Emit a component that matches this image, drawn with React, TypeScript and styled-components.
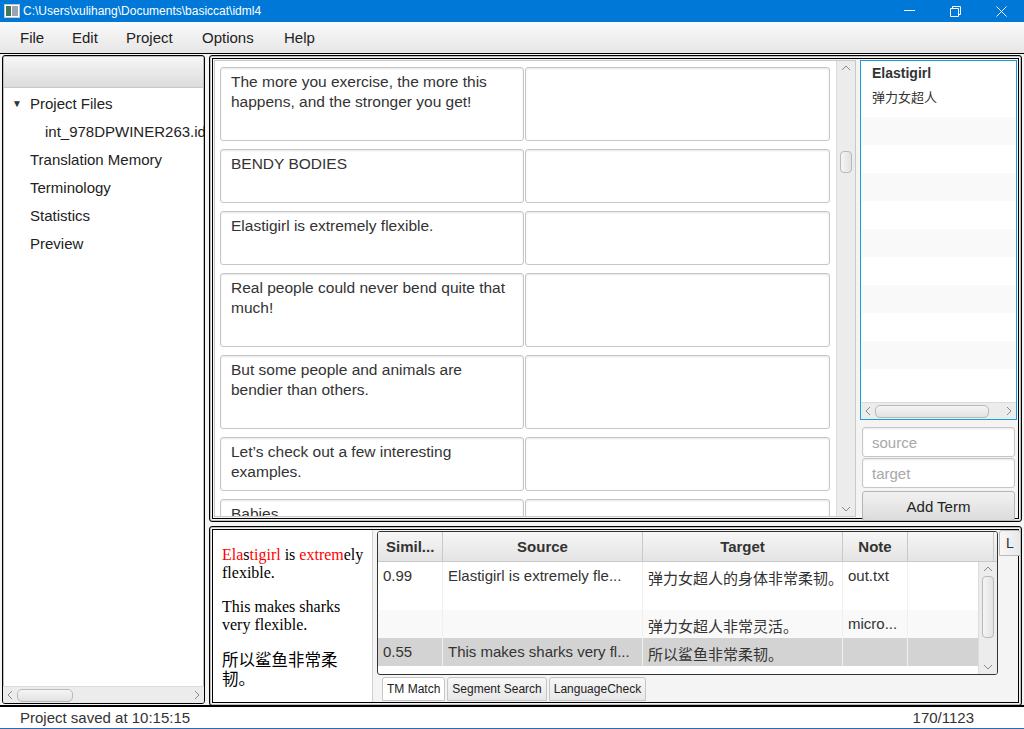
import React from 'react';
import styled, { createGlobalStyle } from 'styled-components';

const GlobalStyle = createGlobalStyle`
  html, body {
    margin: 0;
    padding: 0;
    background: #f4f4f4;
  }
  body {
    font-family: "Liberation Sans", "Noto Sans CJK SC", sans-serif;
    color: #333;
  }
`;

const CJK = `"Liberation Sans", "Noto Sans CJK SC", sans-serif`;

// Window frame
//
const Window = styled.div`
  width: 1024px;
  height: 729px;
  display: flex;
  flex-direction: column;
  background: #f4f4f4;
  overflow: hidden;
  border-bottom: 1px solid #2b6cb0;
  box-sizing: border-box;
`;

const TitleBar = styled.div`
  height: 22px;
  background: #0078d7;
  color: #fff;
  display: flex;
  align-items: center;
  font-size: 12px;
  flex-shrink: 0;
`;

const TitleIcon = styled.div`
  width: 23px;
  display: flex;
  justify-content: center;
`;

const TitleText = styled.span`
  flex: 1;
`;

const WinButton = styled.div`
  width: 46px;
  height: 22px;
  display: flex;
  align-items: center;
  justify-content: center;
`;

const MenuBar = styled.div`
  height: 31px;
  background: linear-gradient(#fafafa, #e6e6e6);
  display: flex;
  align-items: center;
  padding-left: 20px;
  font-size: 15px;
  color: #222;
  flex-shrink: 0;
`;

const MenuItem = styled.span<{ w: number }>`
  width: ${({ w }) => w}px;
`;

const Main = styled.div`
  flex: 1;
  display: flex;
  padding: 1px 2px 1px 2px;
  gap: 4px;
  min-height: 0;
  border-top: 1px solid #000;
`;

// Left: project tree
//
const SidePanel = styled.div`
  width: 201px;
  display: flex;
  flex-direction: column;
  border: 1px solid #000;
  box-shadow: inset 0 0 0 1px #bdbdbd;
  border-radius: 3px;
  background: #fff;
  overflow: hidden;
`;

const SideHeader = styled.div`
  height: 30px;
  background: linear-gradient(#f6f6f6, #dcdcdc);
  border-bottom: 1px solid #c8c8c8;
  margin: 1px;
`;

const Tree = styled.div`
  flex: 1;
  font-size: 15px;
  color: #222;
`;

const TreeRow = styled.div<{ indent: number }>`
  height: 28px;
  display: flex;
  align-items: center;
  padding-left: ${({ indent }) => indent}px;
  white-space: nowrap;
  overflow: hidden;
`;

const Arrow = styled.span`
  width: 18px;
  font-size: 10px;
  color: #333;
  margin-left: -18px;
`;

const HScroll = styled.div`
  height: 16px;
  background: #ececec;
  border-top: 1px solid #dcdcdc;
  display: flex;
  align-items: center;
  padding: 0 4px;
  gap: 4px;
  font-size: 11px;
  color: #999;
  flex-shrink: 0;
`;

const HThumb = styled.div<{ w: number }>`
  width: ${({ w }) => w}px;
  height: 11px;
  border: 1px solid #b9b9b9;
  border-radius: 5px;
  background: linear-gradient(#f5f5f5, #e2e2e2);
`;

const Spacer = styled.div`
  flex: 1;
`;

// Right column
//
const Column = styled.div`
  flex: 1;
  display: flex;
  flex-direction: column;
  gap: 4px;
  min-width: 0;
`;

const Pane = styled.div<{ h: number }>`
  height: ${({ h }) => h}px;
  border: 1px solid #000;
  box-shadow: inset 0 0 0 1px #bdbdbd, inset 0 0 0 2px #f4f4f4, inset 0 0 0 3px #000;
  border-radius: 3px;
  display: flex;
  padding: 4px;
  gap: 4px;
  box-sizing: border-box;
  flex-shrink: 0;
`;

const SegmentArea = styled.div`
  width: 640px;
  display: flex;
  background: #fff;
  border: 1px solid #c8c8c8;
`;

const SegmentList = styled.div`
  flex: 1;
  padding: 6px 4px 0 5px;
  display: flex;
  flex-direction: column;
  gap: 8px;
  overflow: hidden;
`;

const SegmentRow = styled.div<{ h: number }>`
  height: ${({ h }) => h}px;
  display: flex;
  gap: 1px;
  flex-shrink: 0;
`;

const Cell = styled.div<{ wide?: boolean }>`
  width: ${({ wide }) => (wide ? 305 : 304)}px;
  border: 1px solid #c6c6c6;
  border-radius: 3px;
  box-shadow: inset 0 1px 2px #e6e6e6;
  padding: 4px 6px 4px 10px;
  font-size: 15.5px;
  line-height: 20px;
  color: #333;
  box-sizing: border-box;
  background: #fff;
`;

const VScroll = styled.div`
  width: 18px;
  background: #ececec;
  border-left: 1px solid #dcdcdc;
  display: flex;
  flex-direction: column;
  align-items: center;
  font-size: 11px;
  color: #888;
`;

const VThumb = styled.div<{ h: number; top: number }>`
  width: 12px;
  height: ${({ h }) => h}px;
  margin-top: ${({ top }) => top}px;
  border: 1px solid #b9b9b9;
  border-radius: 4px;
  background: linear-gradient(90deg, #f5f5f5, #e2e2e2);
  box-sizing: border-box;
`;

const ScrollArrow = styled.div`
  height: 14px;
  display: flex;
  align-items: center;
  justify-content: center;
`;

// Terminology panel
//
const TermPanel = styled.div`
  flex: 1;
  display: flex;
  flex-direction: column;
  gap: 1px;
`;

const TermList = styled.div`
  height: 358px;
  border: 1px solid #1a9ed7;
  background: #fff;
  display: flex;
  flex-direction: column;
  overflow: hidden;
  flex-shrink: 0;
`;

const TermEntry = styled.div`
  height: 56px;
  padding: 2px 11px 0;
  box-sizing: border-box;
  flex-shrink: 0;
`;

const TermSource = styled.div`
  font-weight: bold;
  font-size: 14px;
  color: #333;
  line-height: 18px;
  margin-top: 1px;
`;

const TermTarget = styled.div`
  font-family: ${CJK};
  font-size: 13px;
  color: #333;
  margin-top: 5px;
`;

const Stripe = styled.div<{ odd: boolean }>`
  height: 28px;
  flex-shrink: 0;
  background: ${({ odd }) => (odd ? '#f9f9f9' : '#fff')};
`;

const TermInput = styled.div`
  height: 30px;
  border: 1px solid #c6c6c6;
  border-radius: 3px;
  background: #fff;
  box-shadow: inset 0 1px 2px #e8e8e8;
  display: flex;
  align-items: center;
  padding-left: 9px;
  font-size: 15px;
  color: #a8a8a8;
  box-sizing: border-box;
  margin: 0 2px;
  flex-shrink: 0;
`;

const Button = styled.div`
  height: 30px;
  border: 1px solid #b5b5b5;
  border-radius: 3px;
  background: linear-gradient(#f2f2f2, #dcdcdc);
  display: flex;
  align-items: center;
  justify-content: center;
  font-size: 15px;
  color: #222;
  margin: 2px 2px 0;
  box-sizing: border-box;
  flex-shrink: 0;
`;

// Bottom: preview and TM
//
const Preview = styled.div`
  width: 160px;
  flex-shrink: 0;
  background: #fff;
  border-right: 1px solid #d0d0d0;
  padding: 16px 4px 0 9px;
  color: #000;
  box-sizing: border-box;
  margin: -1px 0 -1px -1px;
`;

const Para = styled.p<{ cjk?: boolean }>`
  margin: 0 0 16px;
  font-family: ${({ cjk }) =>
    cjk ? `"Noto Sans CJK SC", serif` : `"Liberation Serif", serif`};
  font-size: ${({ cjk }) => (cjk ? 16.5 : 16)}px;
  line-height: ${({ cjk }) => (cjk ? 19 : 18)}px;
`;

const Hit = styled.span`
  color: #f00;
`;

const MatchArea = styled.div`
  flex: 1;
  display: flex;
  flex-direction: column;
  gap: 1px;
  min-width: 0;
`;

const Table = styled.div`
  height: 142px;
  border: 1px solid #333;
  border-radius: 3px;
  background: #fff;
  display: flex;
  flex-direction: column;
  overflow: hidden;
  flex-shrink: 0;
`;

const HeadRow = styled.div`
  height: 29px;
  display: flex;
  background: linear-gradient(#f6f6f6, #e4e4e4);
  border-bottom: 1px solid #c8c8c8;
  flex-shrink: 0;
`;

const HeadCell = styled.div<{ w: number; left?: boolean }>`
  width: ${({ w }) => w}px;
  flex-shrink: 0;
  border-right: 1px solid #c8c8c8;
  display: flex;
  align-items: center;
  justify-content: ${({ left }) => (left ? 'flex-start' : 'center')};
  padding-left: ${({ left }) => (left ? 8 : 0)}px;
  font-weight: bold;
  font-size: 15px;
  color: #333;
  box-sizing: border-box;
`;

const TableBody = styled.div`
  flex: 1;
  display: flex;
  min-height: 0;
`;

const Rows = styled.div`
  flex: 1;
  display: flex;
  flex-direction: column;
`;

const Row = styled.div<{ h: number; bg: string }>`
  height: ${({ h }) => h}px;
  display: flex;
  background: ${({ bg }) => bg};
  flex-shrink: 0;
`;

const DataCell = styled.div<{ w: number }>`
  width: ${({ w }) => w}px;
  flex-shrink: 0;
  padding: 5px 5px 0 5px;
  font-family: ${CJK};
  font-size: 15px;
  color: #333;
  white-space: nowrap;
  overflow: hidden;
  box-sizing: border-box;
  border-right: 1px solid #f0f0f0;
`;

const TabStrip = styled.div`
  display: flex;
  gap: 2px;
  padding: 1px 0 0 5px;
`;

const Tab = styled.div<{ active?: boolean }>`
  height: 24px;
  padding: 0 4px;
  border: 1px solid #c6c6c6;
  border-radius: 3px 3px 0 0;
  background: ${({ active }) =>
    active ? '#fff' : 'linear-gradient(#f7f7f7, #e8e8e8)'};
  font-size: 12px;
  color: #222;
  display: flex;
  align-items: center;
  box-sizing: border-box;
`;

const SideTab = styled.div`
  width: 22px;
  height: 26px;
  border: 1px solid #bbb;
  border-radius: 3px 3px 0 0;
  background: linear-gradient(90deg, #f7f7f7, #e8e8e8);
  font-size: 14px;
  color: #333;
  display: flex;
  justify-content: center;
  padding-top: 4px;
  box-sizing: border-box;
  margin: -1px -4px 0 -3px;
`;

const StatusBar = styled.div`
  height: 21px;
  background: #fff;
  border-top: 2px solid #000;
  display: flex;
  align-items: center;
  justify-content: space-between;
  padding: 0 50px 0 20px;
  font-size: 15px;
  color: #333;
  flex-shrink: 0;
`;

const segments: { src: string; h: number }[] = [
  { src: 'The more you exercise, the more this happens, and the stronger you get!', h: 74 },
  { src: 'BENDY BODIES', h: 54 },
  { src: 'Elastigirl is extremely flexible.', h: 54 },
  { src: 'Real people could never bend quite that much!', h: 74 },
  { src: 'But some people and animals are bendier than others.', h: 74 },
  { src: 'Let\u2019s check out a few interesting examples.', h: 54 },
  { src: 'Babies', h: 54 },
];

const cols = [65, 200, 200, 65, 86];

const matches = [
  { sim: '0.99', src: 'Elastigirl is extremely fle...', tgt: '弹力女超人的身体非常柔韧。', note: 'out.txt', h: 48, bg: '#fff' },
  { sim: '', src: '', tgt: '弹力女超人非常灵活。', note: 'micro...', h: 28, bg: '#f9f9f9' },
  { sim: '0.55', src: 'This makes sharks very fl...', tgt: '所以鲨鱼非常柔韧。', note: '', h: 28, bg: '#d3d3d3' },
];

const Chevron = ({ dir }: { dir: 'up' | 'down' | 'left' | 'right' }) => {
  const d = {
    up: 'M1 5 L5 1 L9 5',
    down: 'M1 1 L5 5 L9 1',
    left: 'M5 1 L1 5 L5 9',
    right: 'M1 1 L5 5 L1 9',
  }[dir];
  const vertical = dir === 'up' || dir === 'down';
  return (
    <svg width={vertical ? 10 : 6} height={vertical ? 6 : 10} viewBox={vertical ? '0 0 10 6' : '0 0 6 10'}>
      <path d={d} fill="none" stroke="#8a8a8a" strokeWidth="1" />
    </svg>
  );
};

export default function App() {
  return (
    <Window>
      <GlobalStyle />
      <TitleBar>
        <TitleIcon>
          <svg width="16" height="14" viewBox="0 0 16 14">
            <rect x="0.5" y="0.5" width="15" height="13" fill="#fff" stroke="#c8c8c8" />
            <rect x="2" y="2" width="5" height="10" fill="#3c7a5a" />
            <rect x="8" y="2" width="6" height="10" fill="#9aa6b2" />
          </svg>
        </TitleIcon>
        <TitleText>C:\Users\xulihang\Documents\basiccat\idml4</TitleText>
        <WinButton>
          <svg width="11" height="2"><rect width="11" height="1" fill="#fff" /></svg>
        </WinButton>
        <WinButton>
          <svg width="11" height="11" viewBox="0 0 11 11">
            <path d="M0.5 2.5 H8.5 V10.5 H0.5 Z M2.5 2.5 V0.5 H10.5 V8.5 H8.5" fill="none" stroke="#fff" />
          </svg>
        </WinButton>
        <WinButton>
          <svg width="11" height="11" viewBox="0 0 11 11">
            <path d="M0.5 0.5 L10.5 10.5 M10.5 0.5 L0.5 10.5" stroke="#fff" />
          </svg>
        </WinButton>
      </TitleBar>
      <MenuBar>
        <MenuItem w={52}>File</MenuItem>
        <MenuItem w={54}>Edit</MenuItem>
        <MenuItem w={76}>Project</MenuItem>
        <MenuItem w={82}>Options</MenuItem>
        <MenuItem w={50}>Help</MenuItem>
      </MenuBar>
      <Main>
        <SidePanel>
          <SideHeader />
          <Tree>
            <TreeRow indent={27}>
              <Arrow>▼</Arrow>Project Files
            </TreeRow>
            <TreeRow indent={42}>int_978DPWINER263.idml</TreeRow>
            <TreeRow indent={27}>Translation Memory</TreeRow>
            <TreeRow indent={27}>Terminology</TreeRow>
            <TreeRow indent={27}>Statistics</TreeRow>
            <TreeRow indent={27}>Preview</TreeRow>
          </Tree>
          <HScroll>
            <Chevron dir="left" />
            <HThumb w={54} />
            <Spacer />
            <Chevron dir="right" />
          </HScroll>
        </SidePanel>
        <Column>
          <Pane h={467}>
            <SegmentArea>
              <SegmentList>
                {segments.map((s, i) => (
                  <SegmentRow key={i} h={s.h}>
                    <Cell>{s.src}</Cell>
                    <Cell wide />
                  </SegmentRow>
                ))}
              </SegmentList>
              <VScroll>
                <ScrollArrow><Chevron dir="up" /></ScrollArrow>
                <VThumb h={22} top={76} />
                <Spacer />
                <ScrollArrow><Chevron dir="down" /></ScrollArrow>
              </VScroll>
            </SegmentArea>
            <TermPanel>
              <TermList>
                <TermEntry>
                  <TermSource>Elastigirl</TermSource>
                  <TermTarget>弹力女超人</TermTarget>
                </TermEntry>
                {Array.from({ length: 10 }).map((_, i) => (
                  <Stripe key={i} odd={i % 2 === 0} />
                ))}
                <Spacer />
                <HScroll>
                  <Chevron dir="left" />
                  <HThumb w={112} />
                  <Spacer />
                  <Chevron dir="right" />
                </HScroll>
              </TermList>
              <TermInput style={{ marginTop: 6 }}>source</TermInput>
              <TermInput>target</TermInput>
              <Button>Add Term</Button>
            </TermPanel>
          </Pane>
          <Pane h={180}>
            <Preview>
              <Para>
                <Hit>Ela</Hit>s<Hit>tigirl</Hit> is <Hit>extrem</Hit>ely flexible.
              </Para>
              <Para>This makes sharks very flexible.</Para>
              <Para cjk>所以鲨鱼非常柔韧。</Para>
            </Preview>
            <MatchArea>
              <Table>
                <HeadRow>
                  <HeadCell w={cols[0]} left>Simil...</HeadCell>
                  <HeadCell w={cols[1]}>Source</HeadCell>
                  <HeadCell w={cols[2]}>Target</HeadCell>
                  <HeadCell w={cols[3]}>Note</HeadCell>
                  <HeadCell w={cols[4]} />
                </HeadRow>
                <TableBody>
                  <Rows>
                    {matches.map((m, i) => (
                      <Row key={i} h={m.h} bg={m.bg}>
                        <DataCell w={cols[0]}>{m.sim}</DataCell>
                        <DataCell w={cols[1]}>{m.src}</DataCell>
                        <DataCell w={cols[2]}>{m.tgt}</DataCell>
                        <DataCell w={cols[3]}>{m.note}</DataCell>
                      </Row>
                    ))}
                  </Rows>
                  <VScroll>
                    <ScrollArrow><Chevron dir="up" /></ScrollArrow>
                    <VThumb h={62} top={0} />
                    <Spacer />
                    <ScrollArrow><Chevron dir="down" /></ScrollArrow>
                  </VScroll>
                </TableBody>
              </Table>
              <TabStrip>
                <Tab active>TM Match</Tab>
                <Tab>Segment Search</Tab>
                <Tab>LanguageCheck</Tab>
              </TabStrip>
            </MatchArea>
            <SideTab>L</SideTab>
          </Pane>
        </Column>
      </Main>
      <StatusBar>
        <span>Project saved at 10:15:15</span>
        <span>170/1123</span>
      </StatusBar>
    </Window>
  );
}
